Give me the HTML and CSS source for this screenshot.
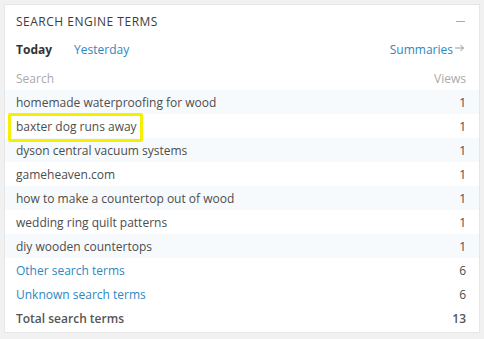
FILE: index.html
```html
<!DOCTYPE html>
<html lang="en">
<head>
  <meta charset="UTF-8" />
  <title>Search Engine Terms</title>
  <link rel="stylesheet" href="styles.css">
</head>
<body>

  <div class="modul">
    <div class="modul-kopf">
      <h2>Search Engine Terms</h2>
      <span class="toggle"></span>
    </div>

    <div class="tabs">
      <span class="tab aktiv">Today</span>
      <a class="tab" href="#">Yesterday</a>
      <a class="summaries" href="#">Summaries<svg class="pfeil" width="10" height="8" viewBox="0 0 10 8"><path d="M0 4h8.5M5.5 1l3 3-3 3" fill="none" stroke="#999" stroke-width="1"/></svg></a>
    </div>

    <div class="tabelle">
      <div class="zeile kopf"><span>Search</span><span>Views</span></div>
      <div class="zeile alt"><span>homemade waterproofing for wood</span><span>1</span></div>
      <div class="zeile markiert"><span>baxter dog runs away</span><span>1</span></div>
      <div class="zeile alt"><span>dyson central vacuum systems</span><span>1</span></div>
      <div class="zeile"><span>gameheaven.com</span><span>1</span></div>
      <div class="zeile alt"><span>how to make a countertop out of wood</span><span>1</span></div>
      <div class="zeile"><span>wedding ring quilt patterns</span><span>1</span></div>
      <div class="zeile alt"><span>diy wooden countertops</span><span>1</span></div>
      <div class="zeile"><a href="#">Other search terms</a><span>6</span></div>
      <div class="zeile"><a href="#">Unknown search terms</a><span>6</span></div>
      <div class="zeile total"><span>Total search terms</span><span>13</span></div>
    </div>
  </div>

</body>
</html>
```

FILE: styles.css
```css
body {
  font-family: "Open Sans", Arial, sans-serif;
  font-size: 12px;
  background-color: #f1f1f1;
  margin: 0;
  padding: 4px;
  color: #4d4d4d;
}
a {
  color: #2e87c0;
  text-decoration: none;
}
.modul {
  background: #fff;
  border: 1px solid #e6e6e6;
  height: 329px;
  box-sizing: border-box;
}
.modul-kopf {
  display: flex;
  justify-content: space-between;
  align-items: center;
  height: 30px;
  padding: 1px 14px 0 11px;
}
.modul-kopf h2 {
  margin: 0;
  font-size: 12px;
  font-weight: normal;
  text-transform: uppercase;
  letter-spacing: 0.5px;
  color: #3c3c3c;
}
.toggle {
  width: 9px;
  height: 1px;
  background-color: #aaa;
  margin-top: 1px;
}
.tabs {
  display: flex;
  align-items: center;
  height: 27px;
  padding: 0 14px 0 11px;
}
.tab {
  margin-right: 22px;
}
.tab.aktiv {
  font-weight: bold;
  color: #333;
}
.summaries {
  margin-left: auto;
  display: flex;
  align-items: center;
}
.pfeil {
  margin-left: 2px;
  margin-top: -3px;
}
.tabelle {
  margin-top: 3px;
}
.zeile {
  display: flex;
  justify-content: space-between;
  align-items: center;
  height: 24px;
  padding: 0 13px 0 11px;
}
.zeile.alt {
  background-color: #f6fafc;
}
.zeile.kopf {
  color: #aaa;
}
.zeile.total {
  font-weight: 600;
  color: #555;
}
.markiert {
  position: relative;
}
.markiert::before {
  content: "";
  position: absolute;
  left: 3px;
  top: -1px;
  width: 129px;
  height: 23px;
  border: 3px solid #f4f000;
  border-radius: 2px;
}
```
